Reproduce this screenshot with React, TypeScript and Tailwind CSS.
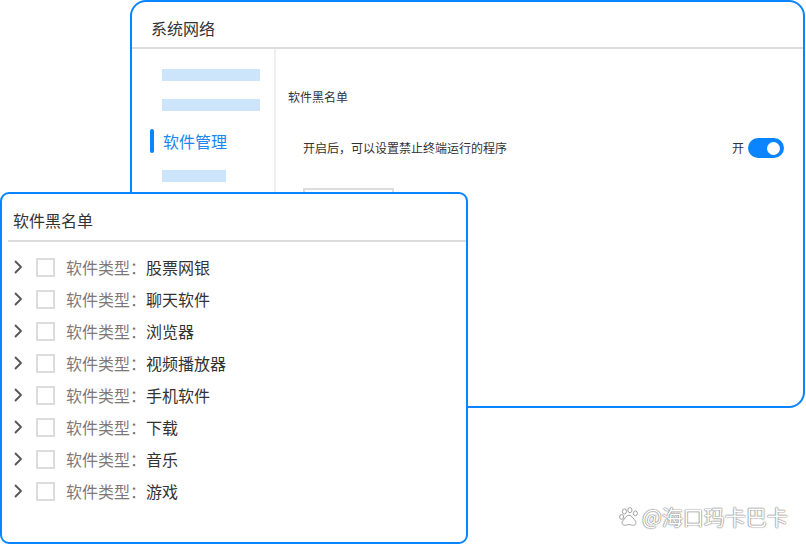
import React from "react";

const ITEMS = ["股票网银", "聊天软件", "浏览器", "视频播放器", "手机软件", "下载", "音乐", "游戏"];

const Chevron = () => (
  <svg width="10" height="14" viewBox="0 0 10 14" fill="none">
    <path d="M2.5 1.5l5.5 5.5-5.5 5.5" stroke="#555" strokeWidth="1.8" strokeLinecap="round" strokeLinejoin="round" />
  </svg>
);

const Paw = () => (
  <svg width="22" height="22" viewBox="0 0 24 24" fill="#fff" stroke="#999" strokeWidth="1">
    <ellipse cx="7" cy="6" rx="2.3" ry="2.8" />
    <ellipse cx="13" cy="4.5" rx="2.3" ry="2.8" />
    <ellipse cx="19" cy="8" rx="2.2" ry="2.6" />
    <ellipse cx="4" cy="12" rx="2.2" ry="2.6" />
    <path d="M12 10c-3 0-5 4-7 6.5-1.5 2 0 5 3 4.5 2-.3 2.5-.8 4-.8s2 .5 4 .8c3 .5 4.5-2.5 3-4.5C17 14 15 10 12 10z" />
  </svg>
);

export default function App() {
  return (
    <div
      className="relative w-[806px] h-[544px] overflow-hidden bg-white"
      style={{ fontFamily: '"Noto Sans CJK SC", "Noto Sans", sans-serif' }}
    >
      {/* BACK WINDOW */}
      <div className="absolute left-[130px] top-0 w-[675px] h-[408px] rounded-[16px] border-2 border-[#0a84ff] bg-white flex flex-col overflow-hidden">
        <div className="h-[47px] flex items-center pt-[6px] pl-[19px] text-[16px] text-[#333] border-b-2 border-[#dcdcdc]">
          系统网络
        </div>
        <div className="flex flex-1">
          <div className="w-[144px] border-r-2 border-[#f0f0f0] flex flex-col pt-[20px]">
            <div className="ml-[30px] w-[98px] h-[12px] bg-[#cde5fb]" />
            <div className="ml-[30px] mt-[18px] w-[98px] h-[12px] bg-[#cde5fb]" />
            <div className="mt-[17px] flex items-center h-[26px]">
              <div className="ml-[18px] w-[4px] h-[24px] rounded-full bg-[#0a84ff]" />
              <span className="ml-[9px] text-[16px] text-[#1a86f0]">软件管理</span>
            </div>
            <div className="ml-[30px] mt-[16px] w-[64px] h-[12px] bg-[#cde5fb]" />
          </div>
          <div className="flex-1 flex flex-col pl-[12px] pr-[19px]">
            <div className="mt-[39px] text-[12px] text-[#333]">软件黑名单</div>
            <div className="mt-[32px] flex items-center justify-between pl-[15px]">
              <span className="text-[12px] text-[#333]">开启后，可以设置禁止终端运行的程序</span>
              <div className="flex items-center gap-[4px]">
                <span className="text-[12px] text-[#333]">开</span>
                <div className="w-[36px] h-[20px] rounded-full bg-[#0a84ff] flex items-center justify-end pr-[4px]">
                  <div className="w-[13px] h-[13px] rounded-full bg-white" />
                </div>
              </div>
            </div>
            <div className="mt-[30px] ml-[15px] w-[91px] h-[30px] border-2 border-[#dcdcdc]" />
          </div>
        </div>
      </div>

      {/* FRONT WINDOW */}
      <div className="absolute left-0 top-[192px] w-[468px] h-[352px] rounded-[9px] border-2 border-[#0a84ff] bg-white flex flex-col">
        <div className="h-[46px] flex items-center pt-[6px] pl-[11px] text-[16px] text-[#333]">软件黑名单</div>
        <div className="ml-[6px] h-[2px] bg-[#dcdcdc]" />
        <div className="flex flex-col pt-[9px]">
          {ITEMS.map((item) => (
            <div key={item} className="h-[32px] flex items-center pl-[11px]">
              <Chevron />
              <div className="ml-[13px] w-[19px] h-[19px] border-2 border-[#dcdcdc] bg-white" />
              <span className="ml-[11px] text-[16px] text-[#7a7a7a]">软件类型：</span>
              <span className="text-[16px] text-[#333]">{item}</span>
            </div>
          ))}
        </div>
      </div>

      {/* WATERMARK */}
      <div className="absolute left-[618px] top-[501px] flex items-center gap-[2px]">
        <Paw />
        <span className="text-[21px] text-white [text-shadow:0_0_1px_#777,0_0_1px_#777,0_0_2px_#aaa]">
          @海口玛卡巴卡
        </span>
      </div>
    </div>
  );
}
